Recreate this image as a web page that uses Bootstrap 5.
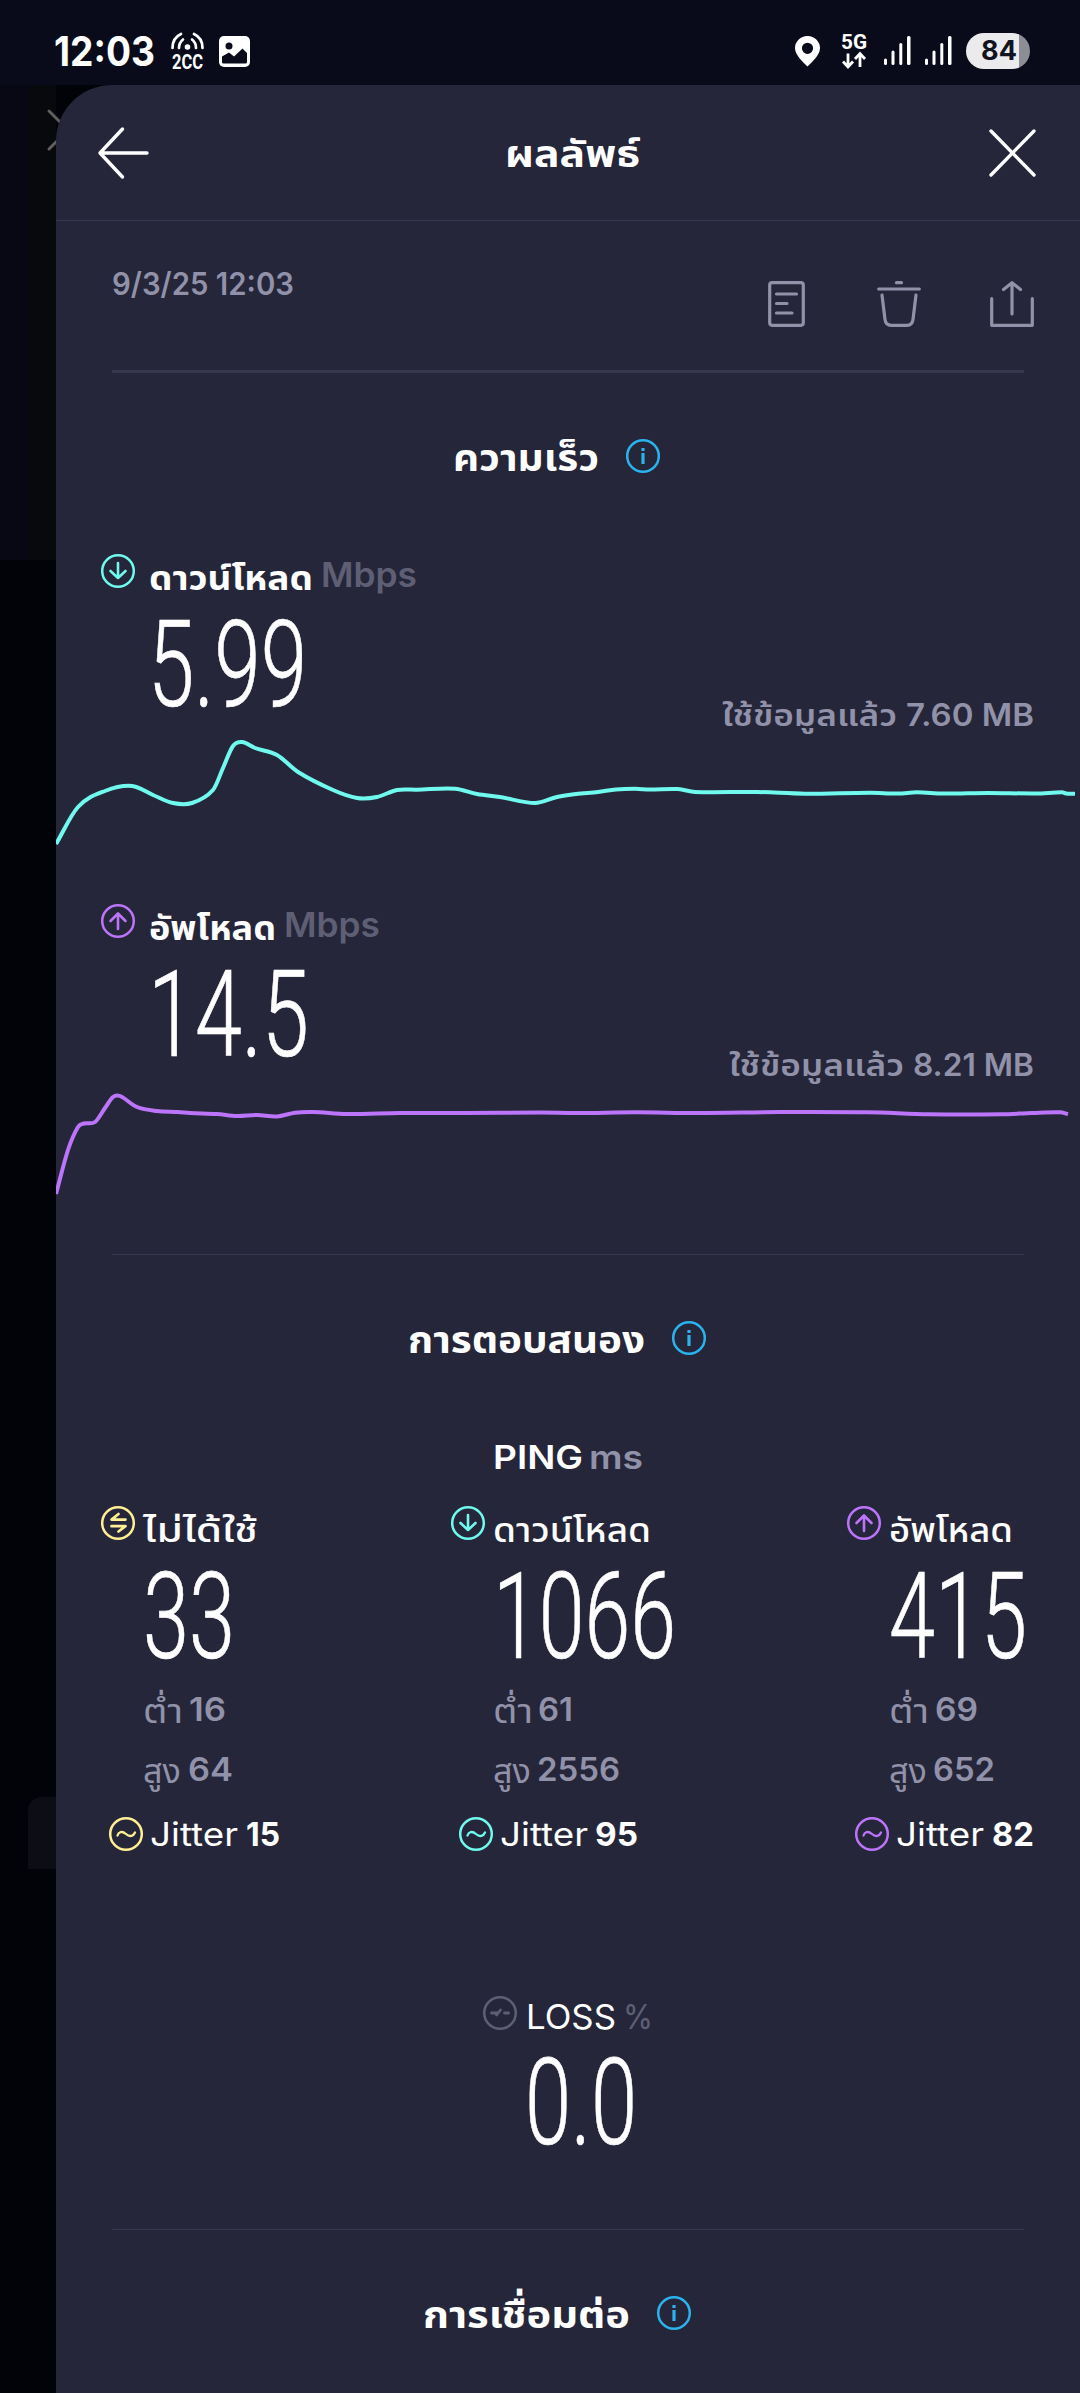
<!DOCTYPE html>
<html lang="th">
<head>
<meta charset="utf-8">
<meta name="viewport" content="width=device-width, initial-scale=1">
<title>ผลลัพธ์</title>
<link href="https://cdn.jsdelivr.net/npm/bootstrap@5.3.0/dist/css/bootstrap.min.css" rel="stylesheet">
<style>
  :root { --panel:#252639; --muted:#9192a9; --dim:#5e5f75; --rule:#37384e; --aqua:#70f9ee; --violet:#bb74fa; --sand:#ffee93; --sky:#2bb3ee; }
  body { background:#020308; color:#fff; font-family:Inter,"Noto Sans Thai","Noto Sans",sans-serif; height:2393px; overflow:hidden; }
  svg { display:block; fill:none; flex:none; overflow:visible; }
  .chart { overflow:hidden; }
  .statusbar { height:85px; background:#090b1a; }
  .backdrop { width:56px; height:2308px; flex:none; background:#020308; position:relative; }
  .backdrop-top { height:475px; background:linear-gradient(90deg,#070813 0 50%,#08090d 50%); }
  .backdrop-card { margin:1237px 0 0 28px; height:72px; background:#0d0e15; border-top-left-radius:14px; }
  .backdrop-x { position:absolute; left:47px; top:24px; }
  .sheet { width:1024px; height:2308px; background:var(--panel); border-top-left-radius:56px; position:relative; z-index:1; }
  .sheet-head { height:136px; border-bottom:1px solid var(--rule); padding:0 44px 0 42px; }
  .t { display:inline-block; white-space:nowrap; line-height:40px; transform-origin:0 50%; flex:none; }
  .s31 { font-size:31px; } .s33 { font-size:33px; } .s34 { font-size:34px; } .s38 { font-size:38px; }
  .muted { color:var(--muted); } .dim { color:var(--dim); }
  .aqua { color:var(--aqua); } .violet { color:var(--violet); } .sand { color:var(--sand); } .sky { color:var(--sky); }
  .figure-num { font-family:Roboto,sans-serif; font-weight:300; font-size:120px; line-height:90px; -webkit-text-stroke:.7px #fff; }
  .meta { height:149px; padding:43px 46px 0 56px; }
  .tools { padding-top:17px; }
  .rule { height:1px; background:var(--rule); margin:0 56px; }
  .rule-bold { height:3px; }
  .speed { height:350px; padding-top:17px; }
  .speed-row { height:66px; padding-left:45px; }
  .speed-body { height:110px; padding:0 46px 0 92px; }
  .used { padding-top:75px; gap:9px; }
  .ping-grid { padding-left:45px; height:352px; }
  .ping-col { width:350px; flex:none; } .ping-col.mid { width:396px; } .ping-col.last { width:187px; }
  .ping-num { height:104px; padding-left:42px; }
  .line { height:60px; padding-left:42px; }
</style>
</head>
<body>
<svg width="0" height="0" class="position-absolute">
  <defs>
    <g id="ring"><circle cx="17" cy="17" r="15.8" stroke="currentColor" stroke-width="2.5"/></g>
    <g id="down"><use href="#ring"/><path d="M17 9v15M9.500 17l7.500 7 7.500-7" stroke="currentColor" stroke-width="2.600" stroke-linecap="round" stroke-linejoin="round"/></g>
    <g id="up"><use href="#ring"/><path d="M17 25V9.500M9.500 17L17 9.500l7.500 7.500" stroke="currentColor" stroke-width="2.600" stroke-linecap="round" stroke-linejoin="round"/></g>
    <g id="swap"><use href="#ring"/><path d="M24.500 13.600H10.500l7-5.600M10.500 20.200h14l-7 5.300" stroke="currentColor" stroke-width="2.700" stroke-linecap="round" stroke-linejoin="round"/></g>
    <g id="wave"><use href="#ring"/><path d="M8.500 18.500C9.500 15 13 13.500 17 17s7.500 2 9-1.500" stroke="currentColor" stroke-width="2.300" stroke-linecap="round"/></g>
    <g id="broken"><use href="#ring"/><path d="M8.500 17h5.500M13.500 19l4-5M21.500 17h4" stroke="currentColor" stroke-width="2.800" stroke-linecap="round"/></g>
    <g id="info"><use href="#ring"/><path d="M17 14v11M17 9v3" stroke="currentColor" stroke-width="3.200"/></g>
  </defs>
</svg>

<header class="statusbar d-flex">
  <span class="t fw-bold" data-w="101" style="font-size:41px;margin:31px 0 0 54px">12:03</span>
  <svg width="34" height="40" viewBox="0 0 34 40" style="margin:31px 0 0 16px">
    <g stroke="#fff" stroke-width="2.700" stroke-linecap="round"><path d="M1.500 17C1.500 11 4.500 5.500 10 3M31.500 17C31.500 11 28.500 5.500 23 3M8 17c0-4 1.500-6.500 4-8.500M25 17c0-4-1.500-6.500-4-8.500"/></g>
    <circle cx="16.500" cy="16" r="2.800" fill="#fff"/>
    <text x="1" y="37.800" font-family="Roboto" font-weight="700" font-size="20" fill="#fff" textLength="31" lengthAdjust="spacingAndGlyphs">2CC</text>
  </svg>
  <svg width="31" height="31" viewBox="0 0 31 31" style="margin:36px 0 0 14px"><rect width="31" height="31" rx="5" fill="#fff"/><circle cx="10" cy="10" r="3.500" fill="#090b1a"/><path d="M3 20.500l7-4 5 4 8.500-8 4.500 4.500V26q0 1.500-1.500 1.500H4.500Q3 27.500 3 26z" fill="#090b1a"/></svg>
  <div class="d-flex ms-auto" style="padding:33px 50px 0 0">
    <svg width="25" height="31" viewBox="0 0 25 31" style="margin-top:3px"><path fill="#fff" fill-rule="evenodd" d="M12.500 0A12.300 12.300 0 0 0 0 12.300C0 19 8 26 12.500 30.500 17 26 25 19 25 12.300A12.300 12.300 0 0 0 12.500 0zm0 6.700a5.600 5.600 0 1 1 0 11.200 5.600 5.600 0 0 1 0-11.200z"/></svg>
    <svg width="26" height="36" viewBox="0 0 26 36" style="margin-left:21px"><text x="0" y="16" font-family="Roboto" font-weight="700" font-size="20" fill="#fff" textLength="26" lengthAdjust="spacingAndGlyphs">5G</text><path d="M7 20.500V34M2 28.500L7 34l5-5.500M19 34V20.500M14 26l5-5.500 5 5.500" stroke="#fff" stroke-width="2.800"/></svg>
    <svg width="68" height="30" viewBox="0 0 68 30" style="margin:3px 0 0 17px"><g fill="#fff"><rect x="0" y="22.500" width="3" height="6.500" rx="1.500"/><rect x="7.500" y="14.500" width="3" height="14.500" rx="1.500"/><rect x="15.300" y="7" width="3" height="22" rx="1.500"/><rect x="23" y="0" width="3.500" height="29" rx="1.500"/><rect x="41" y="22.500" width="3" height="6.500" rx="1.500"/><rect x="48.500" y="14.500" width="3" height="14.500" rx="1.500"/><rect x="56.300" y="7" width="3" height="22" rx="1.500"/><rect x="64" y="0" width="3.500" height="29" rx="1.500"/></g></svg>
    <div class="rounded-pill fw-bold text-center overflow-hidden" style="width:64px;height:36px;margin-left:14px;padding-left:2px;background:linear-gradient(90deg,#ebebed 0 53px,#8d8d95 53px);color:#11131f;font-size:27px;line-height:36px">84</div>
  </div>
</header>

<div class="d-flex">
  <aside class="backdrop">
    <div class="backdrop-top"></div>
    <div class="backdrop-card"></div>
    <svg class="backdrop-x" width="42" height="42" viewBox="0 0 42 42"><path d="M2 2l38 38M2 40L40 2" stroke="#606061" stroke-width="3" stroke-linecap="round"/></svg>
  </aside>
  <main class="sheet">
    <div class="sheet-head d-flex align-items-center justify-content-between">
      <svg width="51" height="52" viewBox="0 0 51 52"><path d="M24.500 2L2 26l22.500 24M2 26h47" stroke="#fff" stroke-width="3.400" stroke-linecap="round" stroke-linejoin="round"/></svg>
      <h1 class="t s38 fw-bold mb-0" data-w="135" style="margin-left:6px">ผลลัพธ์</h1>
      <svg width="47" height="48" viewBox="0 0 47 48"><path d="M2 2l43 44M45 2L2 46" stroke="#fff" stroke-width="3.400" stroke-linecap="round"/></svg>
    </div>

    <div class="meta d-flex justify-content-between">
      <span class="t s31 fw-semibold muted" data-w="182">9/3/25 12:03</span>
      <div class="tools d-flex muted">
        <svg width="37" height="46" viewBox="0 0 37 46" stroke="currentColor" stroke-width="3.200" stroke-linecap="round"><rect x="1.700" y="1.700" width="33.600" height="42.600" rx="2.500"/><path d="M8.500 13h20M8.500 22.500h10.500M8.500 32h15.500"/></svg>
        <svg width="44" height="46" viewBox="0 0 44 46" stroke="currentColor" stroke-width="3.200" stroke-linecap="round" style="margin:0 69px 0 72px"><path d="M19.500 1.700h5M1.700 8h40.600M5 14l3 24.500q.8 5.800 6 5.800h16q5.200 0 6-5.800L39 14"/></svg>
        <svg width="44" height="46" viewBox="0 0 44 46" stroke="currentColor" stroke-width="3.200" stroke-linecap="round" stroke-linejoin="round"><path d="M1.700 17.500v26.800h40.600V17.500M22 33V1.700M13.500 8.500L22 1.700l8.500 6.800"/></svg>
      </div>
    </div>
    <div class="rule rule-bold"></div>

    <div class="d-flex" style="padding:64px 0 0 397px;height:149px">
      <h2 class="t s38 fw-bold mb-0" data-w="146">ความเร็ว</h2>
      <svg class="sky" width="34" height="34" style="margin:2px 0 0 27px"><use href="#info"/></svg>
    </div>

    <section class="speed" style="margin-top:15px">
      <div class="speed-row d-flex">
        <svg class="aqua" width="34" height="34"><use href="#down"/></svg>
        <span class="t s34 fw-bold" data-w="164" style="margin:4px 0 0 14px">ดาวน์โหลด</span>
        <span class="t s34 fw-semibold dim" data-w="96" style="margin:1px 0 0 8px">Mbps</span>
      </div>
      <div class="speed-body d-flex justify-content-between">
        <span class="t figure-num" data-w="159">5.99</span>
        <div class="used d-flex s31 fw-semibold muted"><span class="t" data-w="175">ใช้ข้อมูลแล้ว</span><span class="t" data-w="128">7.60 MB</span></div>
      </div>
      <svg class="chart aqua" width="1024" height="120" viewBox="56 730 1024 120"><path stroke="currentColor" stroke-width="4" data-points="56,844 78,807 105,791 132,786 153,795 173,803 192,803 213,790 223,768 233,746 242,742 255,748 277,755 298,772 333,790 357,798 377,797 397,790 417,789.7 455,788.7 477,794 500,797 535,803 557,797 576,794 598,792 616,789.5 635,788.8 650,789.5 678,789 695,792 757,792 805,793.7 870,792.7 898,793.6 917,792.3 943,793.6 988,793 1036,793.5 1062,792.3 1066,793.5 1075,793.7"/></svg>
    </section>

    <section class="speed">
      <div class="speed-row d-flex">
        <svg class="violet" width="34" height="34"><use href="#up"/></svg>
        <span class="t s34 fw-bold" data-w="127" style="margin:4px 0 0 14px">อัพโหลด</span>
        <span class="t s34 fw-semibold dim" data-w="96" style="margin:1px 0 0 8px">Mbps</span>
      </div>
      <div class="speed-body d-flex justify-content-between">
        <span class="t figure-num" data-w="161">14.5</span>
        <div class="used d-flex s31 fw-semibold muted"><span class="t" data-w="175">ใช้ข้อมูลแล้ว</span><span class="t" data-w="121">8.21 MB</span></div>
      </div>
      <svg class="chart violet" width="1024" height="120" viewBox="56 1080 1024 120"><path stroke="currentColor" stroke-width="4" data-points="56,1194 68,1150 78,1127 84,1123.500 95,1122 105,1108 113,1097 120,1096 137,1107 157,1111 178,1112 190,1113 217,1114 237,1116 257,1115 277,1116.500 295,1112.700 313,1112 347,1114 400,1113 467,1113 540,1112.600 578,1113 636,1112.300 698,1113 781,1112 867,1112.300 929,1114.300 1001,1114.300 1032,1113 1060,1112.300 1068,1114"/></svg>
    </section>

    <div class="rule" style="margin-top:17px"></div>
    <div class="d-flex" style="padding:64px 0 0 352px;height:182px">
      <h2 class="t s38 fw-bold mb-0" data-w="237">การตอบสนอง</h2>
      <svg class="sky" width="34" height="34" style="margin:2px 0 0 27px"><use href="#info"/></svg>
    </div>
    <div class="d-flex" style="padding-left:437px;height:69px">
      <span class="t s33 fw-semibold" data-w="90">PING</span>
      <span class="t s33 fw-semibold muted" data-w="54" style="margin-left:6px">ms</span>
    </div>

    <section class="ping-grid d-flex">
      <div class="ping-col">
        <div class="d-flex" style="height:66px"><svg class="sand" width="34" height="34"><use href="#swap"/></svg><span class="t s34 fw-medium" data-w="115" style="margin:4px 0 0 8px">ไม่ได้ใช้</span></div>
        <div class="ping-num"><span class="t figure-num" data-w="92">33</span></div>
        <div class="line d-flex muted" style="padding-top:13px"><span class="t s33" data-w="40" style="margin-top:2px">ต่ำ</span><span class="t s33 fw-semibold" data-w="37" style="margin-left:6px">16</span></div>
        <div class="line d-flex muted" style="padding-top:13px"><span class="t s33" data-w="38" style="margin-top:2px">สูง</span><span class="t s33 fw-semibold" data-w="45" style="margin-left:7px">64</span></div>
        <div class="d-flex" style="padding:21px 0 0 8px"><svg class="sand" width="34" height="34"><use href="#wave"/></svg><span class="t s33" data-w="88" style="margin:-3px 0 0 7px">Jitter</span><span class="t s33 fw-bold" data-w="34" style="margin:-3px 0 0 8px">15</span></div>
      </div>
      <div class="ping-col mid">
        <div class="d-flex" style="height:66px"><svg class="aqua" width="34" height="34"><use href="#down"/></svg><span class="t s34 fw-medium" data-w="158" style="margin:4px 0 0 8px">ดาวน์โหลด</span></div>
        <div class="ping-num"><span class="t figure-num" data-w="183">1066</span></div>
        <div class="line d-flex muted" style="padding-top:13px"><span class="t s33" data-w="40" style="margin-top:2px">ต่ำ</span><span class="t s33 fw-semibold" data-w="35" style="margin-left:5px">61</span></div>
        <div class="line d-flex muted" style="padding-top:13px"><span class="t s33" data-w="38" style="margin-top:2px">สูง</span><span class="t s33 fw-semibold" data-w="83" style="margin-left:6px">2556</span></div>
        <div class="d-flex" style="padding:21px 0 0 8px"><svg class="aqua" width="34" height="34"><use href="#wave"/></svg><span class="t s33" data-w="88" style="margin:-3px 0 0 7px">Jitter</span><span class="t s33 fw-bold" data-w="43" style="margin:-3px 0 0 7px">95</span></div>
      </div>
      <div class="ping-col last">
        <div class="d-flex" style="height:66px"><svg class="violet" width="34" height="34"><use href="#up"/></svg><span class="t s34 fw-medium" data-w="124" style="margin:4px 0 0 8px">อัพโหลด</span></div>
        <div class="ping-num"><span class="t figure-num" data-w="138">415</span></div>
        <div class="line d-flex muted" style="padding-top:13px"><span class="t s33" data-w="40" style="margin-top:2px">ต่ำ</span><span class="t s33 fw-semibold" data-w="43" style="margin-left:6px">69</span></div>
        <div class="line d-flex muted" style="padding-top:13px"><span class="t s33" data-w="38" style="margin-top:2px">สูง</span><span class="t s33 fw-semibold" data-w="62" style="margin-left:6px">652</span></div>
        <div class="d-flex" style="padding:21px 0 0 8px"><svg class="violet" width="34" height="34"><use href="#wave"/></svg><span class="t s33" data-w="88" style="margin:-3px 0 0 7px">Jitter</span><span class="t s33 fw-bold" data-w="42" style="margin:-3px 0 0 8px">82</span></div>
      </div>
    </section>

    <section style="padding:138px 0 0 427px;height:371px">
      <div class="d-flex" style="height:62px"><svg class="dim" width="34" height="34"><use href="#broken"/></svg><span class="t s34" data-w="90" style="margin:1px 0 0 9px">LOSS</span><span class="t s34 dim" data-w="30" style="margin:1px 0 0 7px">%</span></div>
      <div style="padding-left:42px"><span class="t figure-num" data-w="112">0.0</span></div>
    </section>
    <div class="rule"></div>
    <div class="d-flex" style="padding:64px 0 0 367px">
      <h2 class="t s38 fw-bold mb-0" data-w="207">การเชื่อมต่อ</h2>
      <svg class="sky" width="34" height="34" style="margin:2px 0 0 27px"><use href="#info"/></svg>
    </div>
  </main>
</div>

<script src="https://cdn.jsdelivr.net/npm/bootstrap@5.3.0/dist/js/bootstrap.bundle.min.js"></script>
<script>
  document.querySelectorAll('[data-w]').forEach(el => {
    const natural = el.getBoundingClientRect().width, w = +el.dataset.w;
    el.style.transform = `scaleX(${w / natural})`;
    el.style.marginRight = `${w - natural}px`;
  });
  // Smooth the speed samples into a curve.
  document.querySelectorAll('[data-points]').forEach(path => {
    const p = path.dataset.points.split(' ').map(s => s.split(',').map(Number));
    let d = `M${p[0]}`;
    for (let i = 0; i < p.length - 1; i++) {
      const a = p[i - 1] || p[i], b = p[i], c = p[i + 1], e = p[i + 2] || c;
      const h = (c[0] - b[0]) / 3;
      const m1 = (c[1] - a[1]) / (c[0] - a[0]), m2 = (e[1] - b[1]) / (e[0] - b[0]);
      d += `C${b[0] + h},${b[1] + m1 * h} ${c[0] - h},${c[1] - m2 * h} ${c}`;
    }
    path.setAttribute('d', d);
  });
</script>
</body>
</html>
